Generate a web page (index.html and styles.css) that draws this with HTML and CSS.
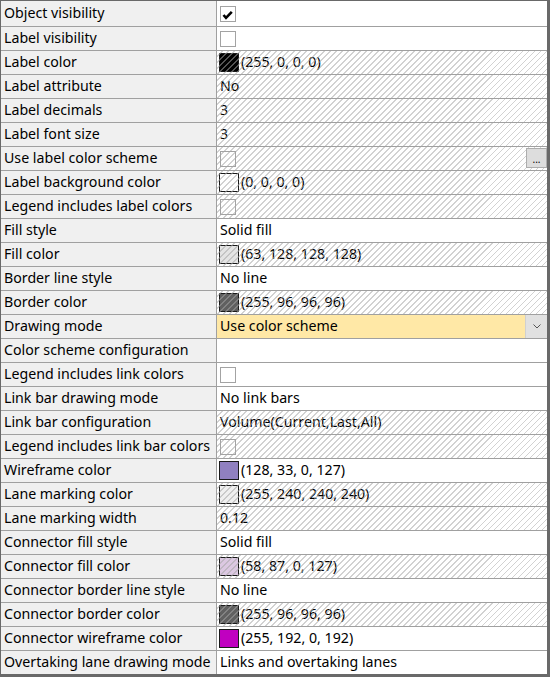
FILE: index.html
```html
<!DOCTYPE html>
<html lang="en">
<head>
    <meta charset="UTF-8">
    <title>Properties</title>
    <link rel="stylesheet" href="styles.css">
</head>
<body>
    <div class="grid">
        <div class="row"><div class="name">Object visibility</div><div class="value"><span class="check"><svg viewBox="0 0 16 16" width="16" height="16"><polyline points="3.5,9 6,11.8 11.8,5.8" fill="none" stroke="#000" stroke-width="2.6"/></svg></span></div></div>
        <div class="row"><div class="name">Label visibility</div><div class="value"><span class="check"></span></div></div>
        <div class="row"><div class="name">Label color</div><div class="value off"><span class="swatch" style="background:#000"></span>(255, 0, 0, 0)</div></div>
        <div class="row"><div class="name">Label attribute</div><div class="value off">No</div></div>
        <div class="row"><div class="name">Label decimals</div><div class="value off">3</div></div>
        <div class="row"><div class="name">Label font size</div><div class="value off">3</div></div>
        <div class="row"><div class="name">Use label color scheme</div><div class="value off"><span class="check"></span><span class="more">...</span></div></div>
        <div class="row"><div class="name">Label background color</div><div class="value off"><span class="swatch" style="background:#fff"></span>(0, 0, 0, 0)</div></div>
        <div class="row"><div class="name">Legend includes label colors</div><div class="value off"><span class="check"></span></div></div>
        <div class="row"><div class="name">Fill style</div><div class="value">Solid fill</div></div>
        <div class="row"><div class="name">Fill color</div><div class="value off"><span class="swatch" style="background:#e4e4e4"></span>(63, 128, 128, 128)</div></div>
        <div class="row"><div class="name">Border line style</div><div class="value">No line</div></div>
        <div class="row"><div class="name">Border color</div><div class="value off"><span class="swatch" style="background:#606060"></span>(255, 96, 96, 96)</div></div>
        <div class="row"><div class="name">Drawing mode</div><div class="value selected"><span class="text">Use color scheme</span><span class="drop"><svg viewBox="0 0 8 5" width="8" height="5"><polyline points="0.5,0.5 4,4 7.5,0.5" fill="none" stroke="#555" stroke-width="1"/></svg></span></div></div>
        <div class="row"><div class="name">Color scheme configuration</div><div class="value"></div></div>
        <div class="row"><div class="name">Legend includes link colors</div><div class="value"><span class="check"></span></div></div>
        <div class="row"><div class="name">Link bar drawing mode</div><div class="value">No link bars</div></div>
        <div class="row"><div class="name">Link bar configuration</div><div class="value off">Volume(Current,Last,All)</div></div>
        <div class="row"><div class="name">Legend includes link bar colors</div><div class="value off"><span class="check"></span></div></div>
        <div class="row"><div class="name">Wireframe color</div><div class="value"><span class="swatch" style="background:#9080c0"></span>(128, 33, 0, 127)</div></div>
        <div class="row"><div class="name">Lane marking color</div><div class="value off"><span class="swatch" style="background:#f0f0f0"></span>(255, 240, 240, 240)</div></div>
        <div class="row"><div class="name">Lane marking width</div><div class="value off">0.12</div></div>
        <div class="row"><div class="name">Connector fill style</div><div class="value">Solid fill</div></div>
        <div class="row"><div class="name">Connector fill color</div><div class="value off"><span class="swatch" style="background:#dcc8e2"></span>(58, 87, 0, 127)</div></div>
        <div class="row"><div class="name">Connector border line style</div><div class="value">No line</div></div>
        <div class="row"><div class="name">Connector border color</div><div class="value off"><span class="swatch" style="background:#606060"></span>(255, 96, 96, 96)</div></div>
        <div class="row"><div class="name">Connector wireframe color</div><div class="value"><span class="swatch" style="background:#c000c0"></span>(255, 192, 0, 192)</div></div>
        <div class="row"><div class="name">Overtaking lane drawing mode</div><div class="value">Links and overtaking lanes</div></div>
    </div>
</body>
</html>
```

FILE: styles.css
```css
body {
    margin: 0;
    background-color: #ffffff;
}

.grid {
    width: 550px;
    height: 677px;
    box-sizing: border-box;
    border-style: solid;
    border-color: #696969;
    border-width: 1px 3px 3px 1px;
    background-color: #ffffff;
    font-family: "Noto Sans", "Open Sans", sans-serif;
    font-size: 14.2px;
    color: #000;
    overflow: hidden;
}

.row {
    display: flex;
    height: 24px;
    box-sizing: border-box;
    border-bottom: 1px solid #a0a0a0;
}

.row:first-child {
    height: 26px;
}

.row:last-child {
    height: 23px;
    border-bottom: none;
}

/* Noto Sans sits a little low, so text gets lifted with bottom padding */
.name {
    width: 216px;
    flex: none;
    padding: 0 0 3px 3px;
    box-sizing: border-box;
    background-color: #f0f0f0;
    border-right: 1px solid #a0a0a0;
    display: flex;
    align-items: center;
    white-space: nowrap;
    overflow: hidden;
}

.value {
    position: relative;
    flex: 1;
    display: flex;
    align-items: center;
    padding: 0 0 3px 3px;
    white-space: nowrap;
    overflow: hidden;
}

/* disabled rows get a diagonal hatch over everything */
.value.off::after {
    content: "";
    position: absolute;
    top: 0;
    left: 0;
    right: 0;
    bottom: 0;
    background-image: repeating-linear-gradient(135deg, transparent 0, transparent 3.2px, rgba(165, 165, 165, 0.5) 3.2px, rgba(165, 165, 165, 0.5) 4.25px);
    pointer-events: none;
}

.check {
    width: 16px;
    height: 16px;
    box-sizing: border-box;
    border: 1px solid #a3a3a3;
    background-color: #fff;
    margin-top: 3px;
    display: flex;
    align-items: center;
    justify-content: center;
}

.check svg {
    display: block;
    margin: -1px;
}

.swatch {
    width: 20px;
    height: 19px;
    box-sizing: border-box;
    border: 1px solid #1a1a1a;
    margin: 3px 2px 0 -1px;
    flex: none;
}

.more {
    position: absolute;
    right: 0;
    top: 1px;
    width: 21px;
    height: 20px;
    box-sizing: border-box;
    border: 1px solid #adadad;
    background-color: #dddddd;
    font-size: 10px;
    line-height: 10px;
    display: flex;
    align-items: flex-end;
    justify-content: center;
    padding-bottom: 3px;
    z-index: 1;
}

.value.selected {
    padding: 0;
    align-items: stretch;
}

.value.selected .text {
    flex: 1;
    padding: 0 0 3px 3px;
    background-color: #ffe8a6;
    display: flex;
    align-items: center;
}

.drop {
    width: 21px;
    flex: none;
    background-color: #e1e1e1;
    border-left: 1px solid #d0d0d0;
    display: flex;
    align-items: center;
    justify-content: center;
}

.drop svg {
    display: block;
}
```
